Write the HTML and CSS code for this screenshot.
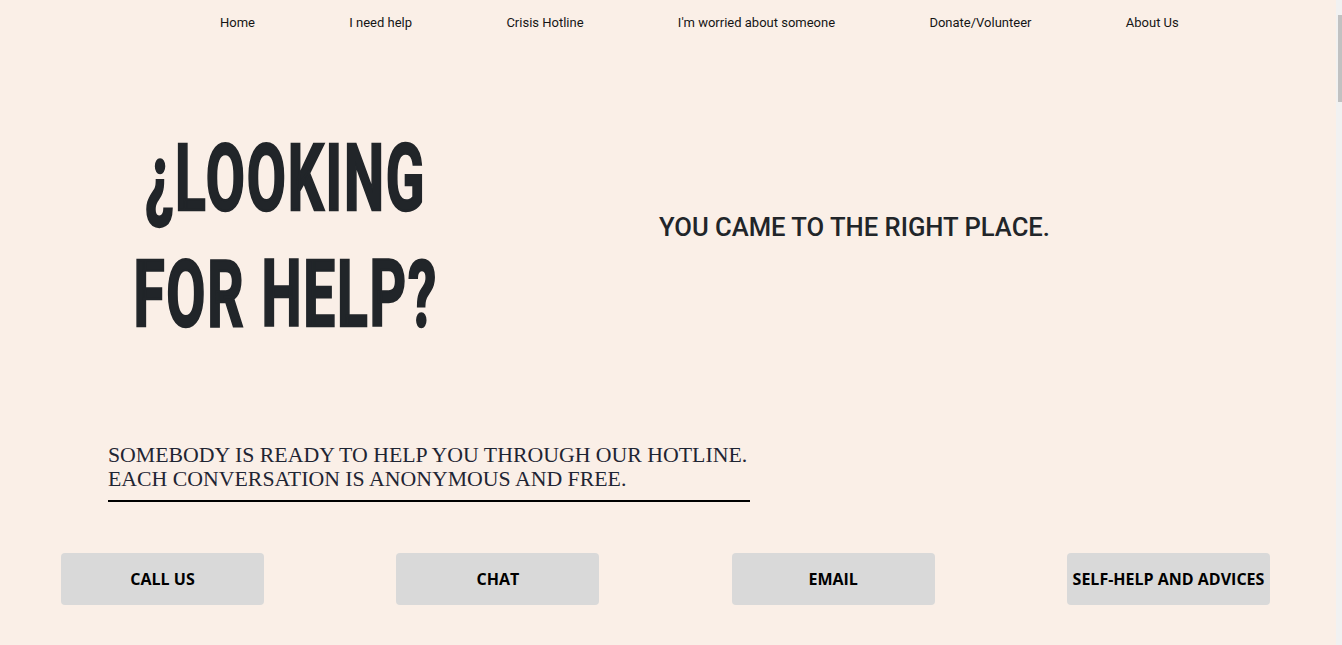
FILE: index.html
```html
<!DOCTYPE html>
<html lang="en">
<head>
<meta charset="utf-8">
<title>Looking for help?</title>
<link rel="stylesheet" href="styles.css">
</head>
<body>
<nav class="nav">
  <a class="nav-link" href="#">Home</a>
  <a class="nav-link" href="#">I need help</a>
  <a class="nav-link" href="#">Crisis Hotline</a>
  <a class="nav-link" href="#">I'm worried about someone</a>
  <a class="nav-link" href="#">Donate/Volunteer</a>
  <a class="nav-link" href="#">About Us</a>
</nav>
<main class="main">
  <section class="hero">
    <div class="hero-left">
      <h1 class="title"><span class="title-line">¿LOOKING</span><span class="title-line">FOR HELP?</span></h1>
    </div>
    <div class="hero-right">
      <p class="tagline">YOU CAME TO THE RIGHT PLACE.</p>
    </div>
  </section>
  <section class="intro">
    <p class="intro-text">SOMEBODY IS READY TO HELP YOU THROUGH OUR HOTLINE.<br>EACH CONVERSATION IS ANONYMOUS AND FREE.</p>
  </section>
  <section class="actions">
    <a class="action" href="#">CALL US</a>
    <a class="action" href="#">CHAT</a>
    <a class="action" href="#">EMAIL</a>
    <a class="action" href="#">SELF-HELP AND ADVICES</a>
  </section>
  <section class="more"></section>
</main>
<div class="scrollbar" aria-hidden="true"><div class="scrollbar-thumb"></div></div>
</body>
</html>
```
FILE: styles.css
```css
html {
  background: #faefe7;
}
body {
  margin: 0;
  background: #faefe7;
  color: #212529;
  font-family: Roboto, "Liberation Sans", sans-serif;
}
.nav {
  display: flex;
  align-items: center;
  height: 45px;
  padding-left: 220px;
  gap: 94.3px;
}
.nav-link {
  font-size: 13px;
  color: #151515;
  text-decoration: none;
}
.hero {
  display: grid;
  grid-template-columns: 571px 1fr;
  height: 386px;
}
.hero-left {
  display: flex;
  justify-content: center;
  padding-top: 76px;
}
.title {
  margin: 0;
  display: flex;
  flex-direction: column;
  align-items: center;
  font-family: Roboto, "Liberation Sans", sans-serif;
  font-weight: 700;
  font-size: 93px;
  line-height: 116px;
  color: #212529;
  transform: scaleX(0.61);
  -webkit-text-stroke: 2.4px #212529;
  letter-spacing: 3px;
}
.hero-right {
  padding-left: 88px;
  padding-top: 166px;
}
.tagline {
  margin: 0;
  font-size: 25.6px;
  font-weight: 500;
  line-height: 32px;
  color: #212529;
}
.intro {
  padding-left: 108px;
}
.intro-text {
  display: inline-block;
  margin: 0;
  padding: 12px 3px 9px 0;
  font-family: "Liberation Serif", serif;
  font-size: 21.8px;
  line-height: 24px;
  color: #1f2533;
  border-bottom: 2px solid #000;
}
.actions {
  display: flex;
  justify-content: space-between;
  margin: 51px 0 0 61px;
  width: 1209px;
}
.action {
  display: flex;
  align-items: center;
  justify-content: center;
  width: 203px;
  height: 52px;
  background: #d9d9d9;
  border-radius: 4px;
  font-family: "Open Sans", "Liberation Sans", sans-serif;
  font-weight: 700;
  font-size: 16px;
  color: #000;
  text-decoration: none;
}
.more {
  height: 3900px;
}
.scrollbar {
  position: fixed;
  top: 0;
  right: 0;
  width: 6px;
  height: 100%;
  background: #f1f1f1;
}
.scrollbar-thumb {
  margin: 15px 0 0 2px;
  height: 87px;
  background: #c1c1c1;
}
```
